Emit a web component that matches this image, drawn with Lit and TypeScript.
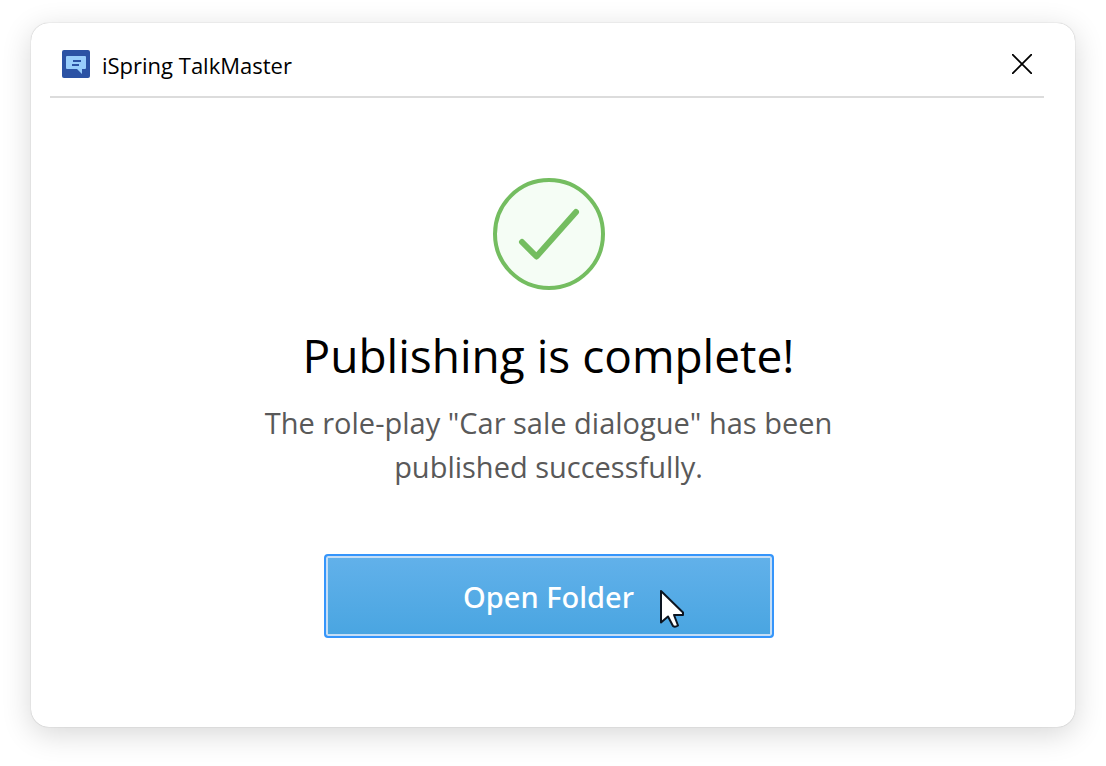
import { LitElement, html, css } from "lit";
import { customElement, property } from "lit/decorators.js";

@customElement("app-root")
export class AppRoot extends LitElement {
  @property() project = "Car sale dialogue";

  static styles = css`
    :host {
      display: flex;
      min-height: 100vh;
      box-sizing: border-box;
      padding: 23px 31px 39px;
      background: #fff;
      font-family: "Segoe UI", "Open Sans", "Noto Sans", sans-serif;
      color: #000;
    }
    .dialog {
      flex: 1;
      display: flex;
      flex-direction: column;
      box-sizing: border-box;
      padding: 0 31px 0 19px;
      border-radius: 18px;
      background: #fff;
      box-shadow: 0 0 1px rgba(0, 0, 0, 0.35), 0 7px 30px rgba(0, 0, 0, 0.16);
    }
    .bar {
      display: flex;
      align-items: center;
      gap: 12px;
      padding: 19px 4px 10px 12px;
      border-bottom: 2px solid #dcdcdc;
    }
    .logo,
    .mark,
    .cross {
      display: block;
      flex: none;
    }
    .title {
      flex: 1;
      margin: 0;
      padding-top: 2px;
      font-size: 22px;
      line-height: 42px;
      font-weight: 400;
    }
    .close {
      padding: 8px;
      border: 0;
      background: none;
    }
    .body {
      flex: 1;
      display: flex;
      flex-direction: column;
      align-items: center;
      padding: 80px 0 40px 3px;
      text-align: center;
    }
    .heading {
      margin: 31px 0 12px;
      font-size: 46px;
      line-height: 68px;
      font-weight: 400;
    }
    .message {
      max-width: 620px;
      margin: 0;
      font-size: 29px;
      line-height: 44px;
      color: #595959;
    }
    .open {
      position: relative;
      width: 450px;
      max-width: 100%;
      margin-top: 65px;
      padding: 21px 0 19px;
      border: 2px solid #3595fb;
      border-radius: 4px;
      background: linear-gradient(#62b1ea, #49a5e1);
      box-shadow: inset 0 0 0 2px #c5def6;
      font-family: "Segoe UI", "Noto Sans", sans-serif;
      font-size: 29px;
      line-height: 40px;
      font-weight: 500;
      color: #fff;
    }
    .pointer {
      position: absolute;
      left: 333px;
      top: 32px;
    }
  `;

  render() {
    const message = `The role-play "${this.project}" has been published successfully.`;
    return html`
      <main class="dialog" role="dialog" aria-labelledby="app-title">
        <header class="bar">
          <svg class="logo" width="28" height="28" viewBox="0 0 28 28" aria-hidden="true">
            <rect width="28" height="28" rx="2" fill="#2b52a4" />
            <path d="M4 7q0-1 1-1h18q1 0 1 1v11q0 1-1 1h-3v5l-5-5H5q-1 0-1-1z" fill="#98cdfb" />
            <path d="M11 11h8M10 15h7" stroke="#2b52a4" stroke-width="2" />
          </svg>
          <h1 class="title" id="app-title">iSpring TalkMaster</h1>
          <button class="close" type="button" aria-label="Close">
            <svg class="cross" width="20" height="20" viewBox="0 0 20 20" aria-hidden="true">
              <path d="M0 0L20 20M20 0L0 20" stroke="#000" stroke-width="1.8" />
            </svg>
          </button>
        </header>
        <section class="body">
          <svg class="mark" width="112" height="112" viewBox="0 0 112 112" aria-hidden="true">
            <circle cx="56" cy="56" r="54" fill="#f5fdf5" stroke="#74bd60" stroke-width="4" />
            <path
              d="M29 64L43.500 78.500L83 34"
              fill="none"
              stroke="#74bd60"
              stroke-width="6"
              stroke-linecap="round"
              stroke-linejoin="round"
            />
          </svg>
          <h2 class="heading">Publishing is complete!</h2>
          <p class="message">${message}</p>
          <button class="open" type="button">
            Open Folder
            <svg class="pointer" width="28" height="42" viewBox="0 0 28 42" aria-hidden="true">
              <path
                d="M2 3V34.500L9 28.500L14 38Q16 39.500 19 37.500L15 27H24V24.500Z"
                fill="#fff"
                stroke="#0c1420"
                stroke-width="2"
                stroke-linejoin="round"
              />
            </svg>
          </button>
        </section>
      </main>
    `;
  }
}
